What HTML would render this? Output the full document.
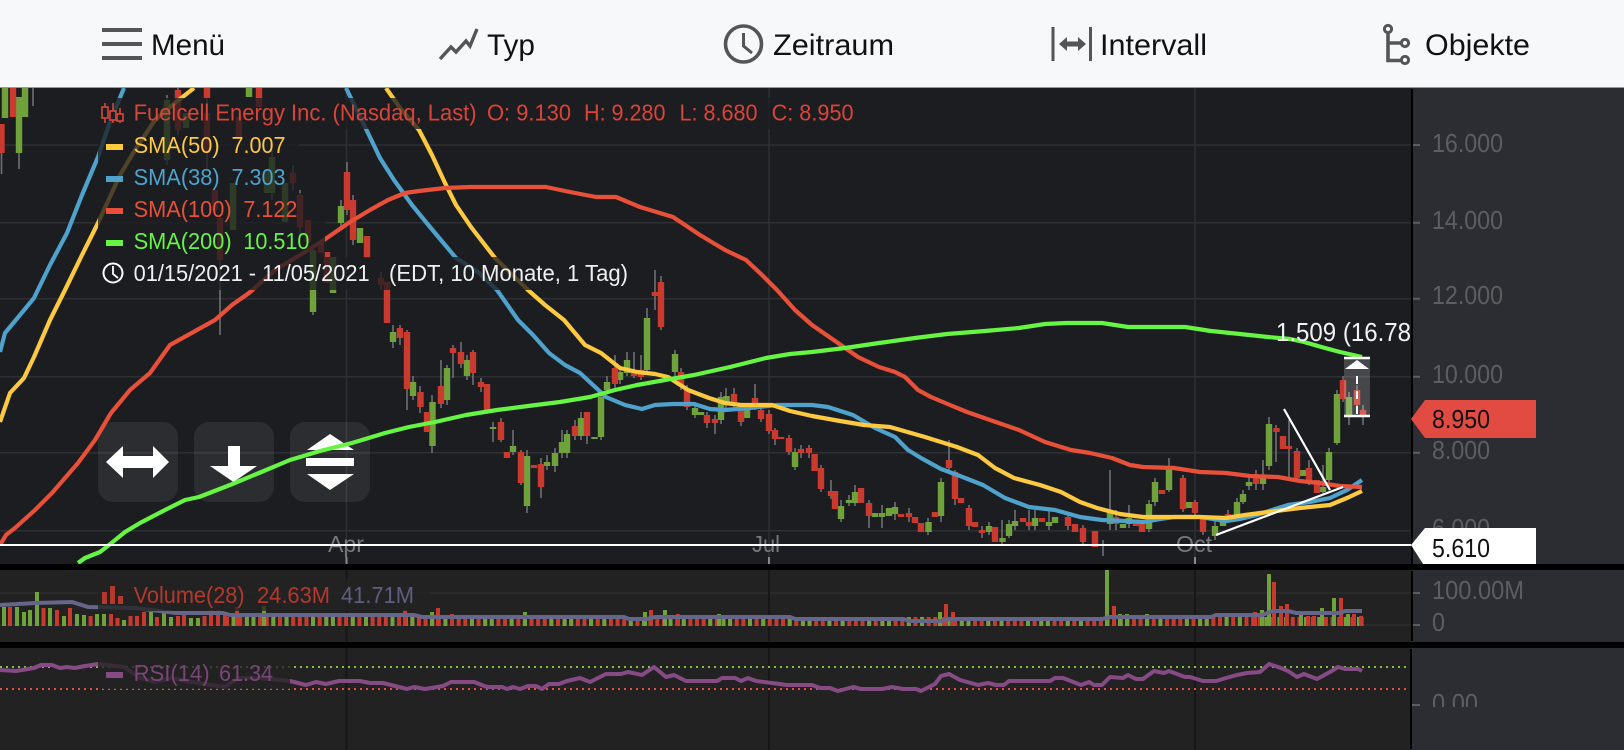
<!DOCTYPE html>
<html lang="de"><head><meta charset="utf-8"><title>Chart</title>
<style>
html,body{margin:0;padding:0;width:1624px;height:750px;overflow:hidden;background:#000}
svg{display:block}
text{font-family:"Liberation Sans",sans-serif}
.nav{font-size:30px;fill:#111}
.ax{font-size:26px;fill:#5d5e62}
.lg{font-size:23px}
.dt{font-size:23px;fill:#77787c}
</style></head><body>
<svg width="1624" height="750" viewBox="0 0 1624 750" xmlns="http://www.w3.org/2000/svg">
<defs>
<clipPath id="c1"><rect x="0" y="88" width="1411" height="476"/></clipPath>
<clipPath id="c2"><rect x="0" y="570" width="1411" height="72"/></clipPath>
<clipPath id="c3"><rect x="1412" y="648" width="212" height="59"/></clipPath>
</defs>
<rect width="1624" height="750" fill="#000"/>
<!-- header -->
<rect width="1624" height="87" fill="#f7f8fa"/>
<rect y="87" width="1624" height="1" fill="#9a9b9d"/>
<g fill="#555"><rect x="102" y="28" width="40" height="4"/><rect x="102" y="42" width="40" height="4"/><rect x="102" y="56" width="40" height="4"/></g>
<text class="nav" x="151" y="55" textLength="74" lengthAdjust="spacingAndGlyphs">Menü</text>
<path d="M440 59L451 47 456 52 466 41 470 46 477 29" fill="none" stroke="#555" stroke-width="3.4"/>
<text class="nav" x="487" y="55" textLength="48" lengthAdjust="spacingAndGlyphs">Typ</text>
<circle cx="743.5" cy="44" r="18" fill="none" stroke="#555" stroke-width="3.6"/>
<path d="M743.5 33V46L752 53" fill="none" stroke="#555" stroke-width="3"/>
<text class="nav" x="773" y="55" textLength="121" lengthAdjust="spacingAndGlyphs">Zeitraum</text>
<path d="M1053 27V61M1090.5 27V61" stroke="#555" stroke-width="3" fill="none"/>
<path d="M1059 44L1067 37V41.5H1078V37L1086 44 1078 51V46.5H1067V51Z" fill="#555"/>
<text class="nav" x="1100" y="55" textLength="107" lengthAdjust="spacingAndGlyphs">Intervall</text>
<path d="M1388 33V60.5H1401M1388 43H1401" fill="none" stroke="#555" stroke-width="3.6"/>
<g fill="none" stroke="#555" stroke-width="3"><circle cx="1388" cy="29" r="3.6"/><circle cx="1405" cy="43" r="3.6"/><circle cx="1405" cy="60" r="3.6"/></g>
<text class="nav" x="1425" y="55" textLength="105" lengthAdjust="spacingAndGlyphs">Objekte</text>

<!-- main panel -->
<rect y="88" width="1411" height="476" fill="#1c1d21"/>
<rect x="1411" y="88" width="213" height="476" fill="#2c2d32"/>
<rect x="1411" y="89" width="2" height="475" fill="#000"/>
<g stroke="#2e2f33" stroke-width="1.6" fill="none">
<path d="M0 145H1411M0 222.7H1411M0 298.7H1411M0 376.7H1411M0 452.7H1411M0 530.7H1411"/>
<path d="M346.5 88V564M769 88V564M1195 88V564"/>
</g>
<g stroke="#5d5e62" stroke-width="2"><path d="M1413 145H1420M1413 222.7H1420M1413 298.7H1420M1413 376.7H1420M1413 452.7H1420"/></g>
<path d="M346.5 557V564M769 557V564M1195 557V564" stroke="#8a8a8a" stroke-width="2"/>
<text class="ax" x="1432" y="152" textLength="71" lengthAdjust="spacingAndGlyphs">16.000</text>
<text class="ax" x="1432" y="229" textLength="71" lengthAdjust="spacingAndGlyphs">14.000</text>
<text class="ax" x="1432" y="304" textLength="71" lengthAdjust="spacingAndGlyphs">12.000</text>
<text class="ax" x="1432" y="383" textLength="71" lengthAdjust="spacingAndGlyphs">10.000</text>
<text class="ax" x="1432" y="459" textLength="58" lengthAdjust="spacingAndGlyphs">8.000</text>
<text class="ax" x="1432" y="537" textLength="58" lengthAdjust="spacingAndGlyphs">6.000</text>

<g clip-path="url(#c1)">
<!-- wicks -->
<path fill="none" stroke="#6f7074" stroke-width="1.6" d="M19 150V169M33 88V106M1.5 150V174M167 95V165M178 85V135M207 88V170M272 150V200M293 165V190M300 190V235M347 162V215M341 200V230M353 195V245M381 272V290M313 245V315M220 215V335M400 325V345M393 325V348M407 330V410M413 376V400M420 386V413M432 395V453M441 360V408M447 365V405M453 345V378M461 342V368M467 355V380M473 350V385M481 378V392M493 422V442M501 418V442M513 430V455M521 450V485M527 450V513M541 458V498M547 455V470M555 448V472M562 430V458M567 430V458M575 420V440M581 412V440M587 412V444M601 390V440M607 376V394M615 355V388M620 368V384M627 352V376M634 352V378M641 355V380M647 308V372M655 270V310M661 276V330M675 350V376M681 368V390M687 385V410M695 402V418M707 412V428M715 415V434M721 392V424M726 388V408M734 388V407M741 405V426M755 384V410M761 405V422M769 410V434M775 428V445M789 435V455M795 448V470M801 445V458M809 445V458M821 465V492M831 480V499M841 500V522M849 495V506M855 485V506M869 500V528M882 505V528M895 502V520M909 508V522M928 518V535M941 478V522M949 440V470M955 470V505M969 505V530M982 526V538M989 522V535M1002 520V545M1009 520V538M1015 510V530M1029 510V530M1035 510V530M1049 510V530M1068 512V530M1083 525V545M1103 540V556M1110 470V530M1116 510V530M1129 505V528M1149 500V532M1155 478V506M1169 458V492M1183 475V512M1195 500V518M1203 515V535M1215 520V540M1228 510V522M1237 498V520M1243 490V504M1249 478V490M1256 470V490M1263 460V490M1269 417V470M1276 425V462M1289 420V480M1297 448V482M1309 460V485M1323 465V495M1329 448V482M1337 390V445M1343 376V402M1349 392V425M1357 385V410M1363 405V425"/>
<!-- green -->
<path fill="none" stroke="#6fa23a" stroke-width="6.4" d="M5 88V118M19 97V153M25 88V117M167 100V160M186 113V128M233 183V230M249 88V97M267 170V193M272 157V193M285 183V222M313 250V312M333 257V293M341 206V223M360 228V243M393 332V342M413 382V396M432.5 402V446M447 368V400M467 360V376M493 427V429M513 446V452M527 456V506M547 462V466M555 453V466M562 442V453M567 434V453M581 418V436M594.5 437V439M601 397V437M607 382V390M620 372V380M627 360V373M647 318V370M675 354V372M695 408V415M701 412V415M721 397V420M726.5 396V405M747 410V418M795 452V467M841 506V519M849 500V503M855 492V503M875 513V517M882 513V517M889 508V516M895 507V514M928.5 522V532M941 482V516M989 526V532M1002.5 538V542M1009 524V536M1015 521V526M1035 518V526M1049 522V526M1055 517V523M1110 512V524M1123 524V528M1129 518V524M1149 504V529M1155 482V502M1169 467V490M1189 502V508M1215 526V536M1223 522V526M1237 502V517M1243 494V502M1249 482V486M1263 478V484M1269 424V466M1303 470V476M1323 487V492M1329 452V480M1337 394V443M1349 397V416"/>
<!-- red -->
<path fill="none" stroke="#cb3a2e" stroke-width="6.4" d="M13 88V117M1.5 124V153M178 90V130M207 88V98M207 113V153M215 190V210M220 218V260M239 117V137M259 88V107M293 173V183M300 195V227M308 220V242M321 243V253M327 252V283M347 172V210M353 200V240M367 236V258M381 278V285M387 282V323M400 328V338M407 332V389M420.5 392V407M427 412V432M441 386V404M453 348V353M461 352V364M473 352V373M481 382V387M487 384V410M501 422V440M507 452V458M521 452V483M534 465V468M541 464V487M575 426V436M587 412V436M615 368V384M634 370V376M641 370V377M655 292V296M661 282V327M681 372V385M687 390V407M707 415V423M715 419V423M734 394V403M741 405V422M755 398V407M761 410V419M769 414V431M775 430V439M781 437V439M789 438V452M801 449V453M809 448V453M814.6 454V471M821 468V489M831 491V496M835 491V509M861 488V503M869 503V516M901 514V517M909 513V517M915 517V523M921 523V532M935 512V517M949 460V468M955 472V499M961 498V503M969 508V526M975 522V527M982 530V533M995 527V542M1023 518V522M1029 522V526M1042 518V522M1068 517V526M1075 524V532M1083 528V542M1095 531V547M1116 517V524M1136 523V526M1142 523V532M1162 490V494M1183 478V509M1195 502V513M1203 517V532M1228 514V518M1256 477V484M1276.5 428V432M1283 436V449M1289 446V449M1297 451V478M1309 468V482M1317 480V493M1343 380V399M1357 390V405M1363 410V416"/>
<!-- buttons -->
<g fill="#fff" fill-opacity=".075"><rect x="98" y="422" width="80" height="80" rx="15"/><rect x="194" y="422" width="80" height="80" rx="15"/><rect x="290" y="422" width="80" height="80" rx="15"/></g>
<g fill="#fff">
<path d="M106 462L123 446V456H153V446L169 462 153 478V468H123V478Z"/>
<path d="M228 446H240V466H257L233.5 482 210 466H228Z"/>
<path d="M330 434L354 450H307Z"/><rect x="306" y="458" width="48" height="8"/><path d="M307 474H354L330 490Z"/>
</g>
<!-- moving averages -->
<g fill="none" stroke-linejoin="round">
<path stroke="#4ea2cc" stroke-width="4.2" d="M0 352L5 333 20 315 34 298 50 265 67 233 82 195 98 157 110 122 124 88M346 88L368 133 380 158 394 180 412 205 430 227 456 258 478 272 497 290 518 320 533 335 549 353 565 365 580 373 606 397 625 405 642 409 655 405 673 404 694 404 710 409 725 410 750 408 777 405 812 405 828 407 853 415 875 428 895 437 908 450 921 458 941 469 960 476 983 485 1005 498 1029 507 1055 510 1080 517 1102 520 1125 521 1143 522 1160 519 1174 517 1200 517 1226 521 1240 519 1257 515 1275 509 1288 505 1310 502 1330 498 1347 490 1362 480"/>
<path stroke="#fdc93e" stroke-width="4.2" d="M0 422L10 393 24 378 34 357 50 320 65 290 82 255 98 223 120 175 135 150 155 120 175 103 194 88M386 88L400 108 419 130 432 155 445 183 456 205 471 227 495 258 528 290 545 305 564 320 585 345 601 353 620 368 637 372 655 374 668 377 688 390 709 398 725 403 741 405 772 405 790 411 812 416 840 421 864 425 890 427 925 437 957 447 978 455 995 468 1014 478 1040 485 1061 492 1080 502 1097 508 1120 514 1143 517 1174 517 1200 517 1226 518 1245 515 1268 512 1300 508 1330 505 1347 498 1362 491"/>
<path stroke="#e8503a" stroke-width="4.2" d="M0 545L6 535 15 528 35 510 52 493 65 478 78 463 95 440 111 413 130 390 150 373 170 345 197 330 215 320 232 305 249 293 275 270 300 255 321 242 350 222 370 210 388 200 405 193 419 191 445 188 471 187 510 187 546 187 570 192 596 197 616 197 640 207 673 217 700 235 725 250 746 260 762 275 777 290 795 310 812 325 838 343 858 357 879 367 895 372 905 377 918 390 931 397 950 405 967 412 990 420 1019 430 1045 442 1071 450 1090 453 1112 458 1130 465 1143 467 1174 468 1200 472 1226 473 1250 476 1278 477 1300 481 1319 483 1340 486 1362 487"/>
<path stroke="#66f542" stroke-width="4.2" d="M78 563L85 558 100 552 109 545 125 532 140 523 165 510 185 500 199 497 230 485 259 473 290 460 320 451 352 443 385 433 409 427 435 422 466 415 497 410 528 406 560 402 590 397 615 390 637 385 665 380 694 375 730 367 766 358 790 354 812 352 845 348 879 343 915 338 947 334 985 331 1019 328 1045 324 1066 323 1102 323 1128 327 1160 327 1185 327 1211 331 1240 334 1268 337 1290 339 1304 342 1325 348 1340 352 1362 357"/>
</g>
<!-- drawings -->
<path d="M1216 535L1343 487M1284 409L1330 490" stroke="#fff" stroke-width="2.2" fill="none"/>
<rect x="1344" y="358" width="26" height="58" fill="#fff" fill-opacity=".19"/>
<path d="M1344 358H1370M1344 416H1370" stroke="#fff" stroke-width="2.4"/>
<path d="M1357 360L1369 369H1345Z" fill="#fff"/>
<path d="M1357 376V416" stroke="#fff" stroke-width="2" stroke-dasharray="8 7"/>
<text x="1276" y="341" font-size="26" fill="#f2f2f2" textLength="135" lengthAdjust="spacingAndGlyphs">1.509 (16.78</text>
<text class="dt" x="328" y="552" textLength="36" lengthAdjust="spacingAndGlyphs">Apr</text>
<text class="dt" x="752" y="552" textLength="28" lengthAdjust="spacingAndGlyphs">Jul</text>
<text class="dt" x="1176" y="552" textLength="36" lengthAdjust="spacingAndGlyphs">Oct</text>
<rect x="0" y="544" width="1411" height="2" fill="#fff"/>
</g>

<!-- price labels -->
<path d="M1411 419L1425 400H1536V438H1425Z" fill="#e24b41"/>
<text x="1432" y="428" font-size="26" fill="#111" textLength="58" lengthAdjust="spacingAndGlyphs">8.950</text>
<path d="M1411 545L1425 528H1536V564H1423Z" fill="#fff"/>
<text x="1432" y="557" font-size="26" fill="#111" textLength="58" lengthAdjust="spacingAndGlyphs">5.610</text>

<!-- legend main -->
<g fill="#1c1d21" fill-opacity=".78">
<rect x="98" y="98" width="770" height="31"/>
<rect x="98" y="129" width="201" height="64"/>
<rect x="98" y="193" width="227" height="64"/>
<rect x="98" y="257" width="542" height="33"/>
</g>
<path d="M105 103V123M113 103V123M120 108V123" fill="none" stroke="#d8473c" stroke-width="1.6"/>
<g fill="#1c1d21" stroke="#d8473c" stroke-width="1.6"><rect x="102" y="107" width="6" height="11"/><rect x="110" y="111" width="6" height="9"/><rect x="117" y="114" width="6" height="7"/></g>
<g class="lg" fill="#dc4438">
<text class="lg" x="133.6" y="120.5" textLength="343" lengthAdjust="spacingAndGlyphs">Fuelcell Energy Inc. (Nasdaq, Last)</text>
<text class="lg" x="487" y="120.5" textLength="84" lengthAdjust="spacingAndGlyphs">O: 9.130</text>
<text class="lg" x="584" y="120.5" textLength="81.5" lengthAdjust="spacingAndGlyphs">H: 9.280</text>
<text class="lg" x="679.5" y="120.5" textLength="78" lengthAdjust="spacingAndGlyphs">L: 8.680</text>
<text class="lg" x="771.6" y="120.5" textLength="82" lengthAdjust="spacingAndGlyphs">C: 8.950</text>
</g>
<rect x="106" y="144" width="17" height="6" fill="#fdc93e"/>
<text class="lg" fill="#fdc93e" x="133.6" y="153" textLength="86" lengthAdjust="spacingAndGlyphs">SMA(50)</text>
<text class="lg" fill="#fdc93e" x="231.5" y="153" textLength="54" lengthAdjust="spacingAndGlyphs">7.007</text>
<rect x="106" y="176" width="17" height="6" fill="#4ea2cc"/>
<text class="lg" fill="#4ea2cc" x="133.6" y="185" textLength="86" lengthAdjust="spacingAndGlyphs">SMA(38)</text>
<text class="lg" fill="#4ea2cc" x="231.5" y="185" textLength="54" lengthAdjust="spacingAndGlyphs">7.303</text>
<rect x="106" y="208" width="17" height="6" fill="#e8503a"/>
<text class="lg" fill="#e8503a" x="133.6" y="217" textLength="98" lengthAdjust="spacingAndGlyphs">SMA(100)</text>
<text class="lg" fill="#e8503a" x="243.4" y="217" textLength="54" lengthAdjust="spacingAndGlyphs">7.122</text>
<rect x="106" y="240" width="17" height="6" fill="#66f542"/>
<text class="lg" fill="#66f542" x="133.6" y="249" textLength="98" lengthAdjust="spacingAndGlyphs">SMA(200)</text>
<text class="lg" fill="#66f542" x="243.4" y="249" textLength="66" lengthAdjust="spacingAndGlyphs">10.510</text>
<circle cx="113" cy="273" r="9.5" fill="none" stroke="#fff" stroke-width="2"/>
<path d="M113 266V274L118 278" fill="none" stroke="#fff" stroke-width="1.8"/>
<text class="lg" fill="#f0f0f0" x="133.6" y="281" textLength="236" lengthAdjust="spacingAndGlyphs">01/15/2021 - 11/05/2021</text>
<text class="lg" fill="#f0f0f0" x="389" y="281" textLength="239" lengthAdjust="spacingAndGlyphs">(EDT, 10 Monate, 1 Tag)</text>

<!-- volume panel -->
<rect y="570" width="1411" height="72" fill="#222223"/>
<rect x="1411" y="570" width="213" height="72" fill="#2c2d32"/>
<rect x="1411" y="571" width="2" height="70" fill="#000"/>
<path d="M0 593H1411M0 625H1411" stroke="#2d2d2e" stroke-width="1.6"/>
<path d="M346.5 570V642M769 570V642M1195 570V642" stroke="#171718" stroke-width="2"/>
<g clip-path="url(#c2)">
<path d="M225 621.5H1364" stroke="#c93a2e" stroke-width="9" stroke-dasharray="4 2.62"/>
<path d="M231.6 621.5H1364" stroke="#6fa23a" stroke-width="9" stroke-dasharray="4 9.24 4 2.62 4 15.86 4 9.24 4 22.48"/>
<path fill="none" stroke="#6fa23a" stroke-width="4" d="M4 626V607M17 626V607M24 626V612M30 626V610M37 626V592M50 626V608M64 626V616M77 626V614M84 626V615M97 626V614M104 626V614M124 626V620M151 626V612M164 626V613M171 626V617M191 626V618M198 626V618M264 626V606M432 626V612M525 626V612M645 626V612M665 626V610M719 626V614M940 626V612M1107 626V570M1269 626V574M1262 626V610M1322 626V608M1334 626V598M1348 626V614M1301 626V615M1120 626V614M1127 626V614M1147 626V614"/>
<path fill="none" stroke="#c93a2e" stroke-width="4" d="M10 626V607M43.5 626V608M57 626V610M70 626V608M90.6 626V616M111 626V614M117.5 626V618M130.5 626V616M137 626V616M144 626V612M157 626V617M178 626V616M184 626V615M204.5 626V616M211 626V610M218 626V610M225 626V615M237 626V607M405 626V610M438 626V608M452 626V614M651 626V610M678 626V614M946 626V604M953 626V612M1114 626V606M1255 626V612M1274 626V582M1281 626V606M1287 626V604M1308 626V616M1314 626V616M1341 626V598M1354 626V614M1361 626V616"/>
<path fill="none" stroke="#66658a" stroke-width="4" d="M0 605L36 603 72 602 88 607 135 608 176 613 223 613 230 615 414 615 422 617 624 617 629 619 647 619 655 617 790 617 795 619 903 619 910 621 941 621 949 619 1102 619 1110 617 1211 617 1216 615 1262 615 1273 611 1288 611 1296 613 1340 613 1345 611 1362 611"/>
</g>
<path d="M1413 593H1420M1413 625H1420" stroke="#5d5e62" stroke-width="2"/>
<text class="ax" x="1432" y="599" textLength="92" lengthAdjust="spacingAndGlyphs">100.00M</text>
<text class="ax" x="1432" y="631" textLength="13" lengthAdjust="spacingAndGlyphs">0</text>
<rect x="98" y="579" width="331" height="32" fill="#222223" fill-opacity=".78"/>
<path d="M102 604V592H107V604ZM110 604V586H115V604ZM118 604V596H123V604Z" fill="#b5382d"/>
<text class="lg" fill="#b5382d" x="133.6" y="603" textLength="111" lengthAdjust="spacingAndGlyphs">Volume(28)</text>
<text class="lg" fill="#b5382d" x="257" y="603" textLength="73" lengthAdjust="spacingAndGlyphs">24.63M</text>
<text class="lg" fill="#5f5e80" x="341" y="603" textLength="73" lengthAdjust="spacingAndGlyphs">41.71M</text>

<!-- rsi panel -->
<rect y="648" width="1411" height="102" fill="#222223"/>
<rect x="1411" y="648" width="213" height="102" fill="#2c2d32"/>
<rect x="1410" y="649" width="2" height="100" fill="#000"/>
<path d="M346.5 648V750M769 648V750M1195 648V750" stroke="#171718" stroke-width="2"/>
<path d="M0 667H1408" stroke="#86bf43" stroke-width="2" stroke-dasharray="2 4"/>
<path d="M0 689H1408" stroke="#e8503a" stroke-width="2" stroke-dasharray="2 4"/>
<path fill="none" stroke="#864a85" stroke-width="4" stroke-linejoin="round" d="M0 670L16 671 34 668 41 665 52 665 60 668 67 667 75 668 85 666 98 664 124 667 140 678 155 682 171 678 192 682 225 687 238 678 259 678 290 681 306 685 316 682 326 684 339 681 360 681 370 683 383 683 407 689 414 687 425 689 443 686 451 682 474 682 487 687 502 687 507 689 513 687 520 689 528 686 536 686 542 689 549 684 559 684 567 681 580 678 590 682 606 674 621 674 628 672 642 675 654 667 666 677 674 675 686 681 717 681 722 678 735 678 741 681 748 678 756 681 772 683 787 685 812 685 820 688 830 688 838 691 853 687 861 689 882 689 892 687 903 689 916 689 921 691 935 684 941 676 949 674 960 680 978 685 988 683 996 685 1004 685 1009 681 1050 681 1055 678 1063 678 1081 685 1089 682 1094 685 1102 685 1110 677 1123 678 1128 675 1136 679 1143 679 1154 671 1164 673 1169 671 1185 677 1190 677 1203 681 1216 681 1226 678 1237 675 1247 673 1260 672 1269 664 1281 668 1288 671 1297 677 1304 674 1317 679 1330 672 1338 667 1345 669 1358 669 1362 671"/>
<rect x="98" y="657" width="192" height="32" fill="#222223" fill-opacity=".78"/>
<rect x="106" y="672" width="17" height="6" fill="#864a85"/>
<text class="lg" fill="#7a4577" x="133.6" y="681" textLength="76" lengthAdjust="spacingAndGlyphs">RSI(14)</text>
<text class="lg" fill="#7a4577" x="219" y="681" textLength="54" lengthAdjust="spacingAndGlyphs">61.34</text>
<rect x="1412" y="704" width="8" height="2" fill="#5d5e62"/>
<g clip-path="url(#c3)"><text class="ax" x="1432" y="712" textLength="46" lengthAdjust="spacingAndGlyphs">0.00</text></g>
</svg>
</body></html>
